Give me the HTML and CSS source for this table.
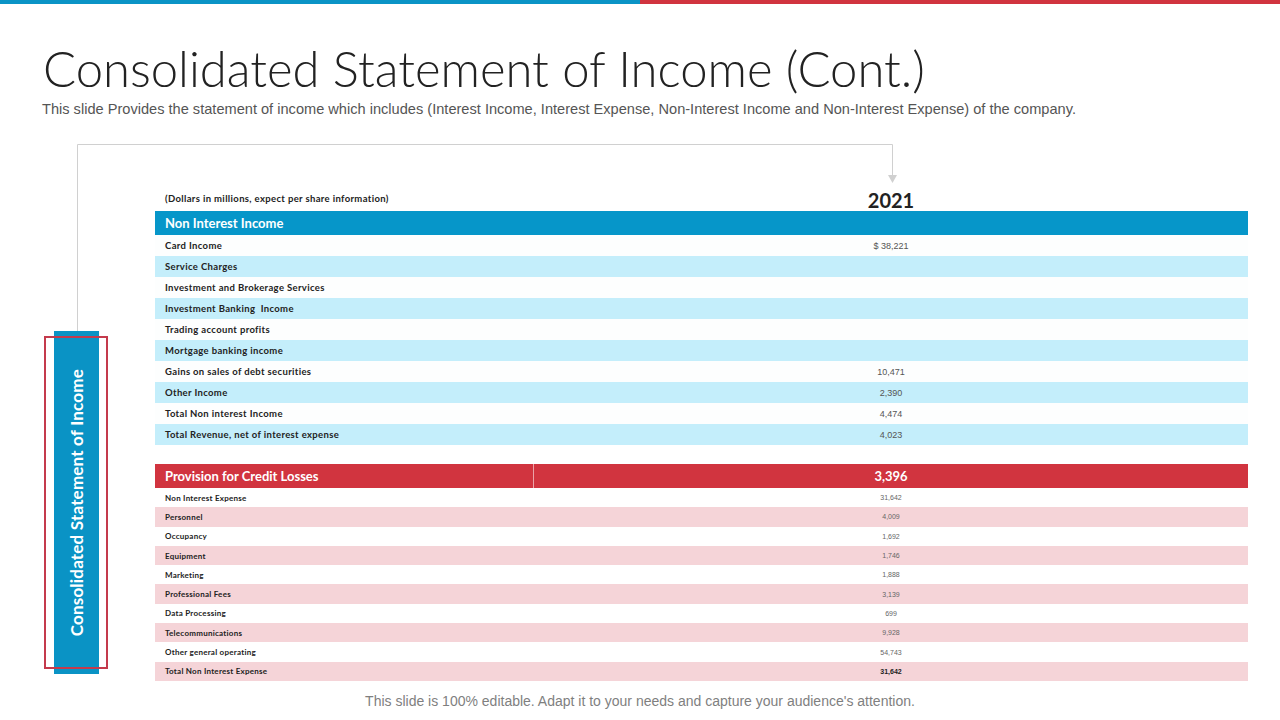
FILE: index.html
```html
<!DOCTYPE html>
<html lang="en">
<head>
<meta charset="utf-8">
<title>Consolidated Statement of Income (Cont.)</title>
<link rel="stylesheet" href="styles.css">
</head>
<body>
<div class="slide">
  <div class="topbar"><div class="tb-blue"></div><div class="tb-red"></div></div>
  <header class="head">
    <h1 class="title">Consolidated Statement of Income (Cont.)</h1>
    <p class="subtitle">This slide Provides the statement of income which includes (Interest Income, Interest Expense, Non-Interest Income and Non-Interest Expense) of the company.</p>
  </header>
  <main class="content">
    <svg class="connector" width="1280" height="200" viewBox="0 0 1280 200">
      <path d="M77.5 188 V0.5 H892.5 V32" fill="none" stroke="#d0d0d0" stroke-width="1"/>
      <path d="M888 31 L897 31 L892.5 39 Z" fill="#d0d0d0"/>
    </svg>
    <aside class="side">
      <div class="sidebar"><span class="side-label">Consolidated Statement of Income</span></div>
      <div class="side-outline"></div>
    </aside>
    <section class="table">
      <div class="cap-row">
        <div class="caption">(Dollars in millions, expect per share information)</div>
        <div class="year">2021</div>
      </div>
      <div class="row head-blue"><div class="lbl">Non Interest Income</div><div class="val"></div></div>
      <div class="row b"><div class="lbl">Card Income</div><div class="val">$ 38,221</div></div>
      <div class="row b alt"><div class="lbl">Service Charges</div><div class="val"></div></div>
      <div class="row b"><div class="lbl">Investment and Brokerage Services</div><div class="val"></div></div>
      <div class="row b alt"><div class="lbl">Investment Banking&nbsp; Income</div><div class="val"></div></div>
      <div class="row b"><div class="lbl">Trading account profits</div><div class="val"></div></div>
      <div class="row b alt"><div class="lbl">Mortgage banking income</div><div class="val"></div></div>
      <div class="row b"><div class="lbl">Gains on sales of debt securities</div><div class="val">10,471</div></div>
      <div class="row b alt"><div class="lbl">Other Income</div><div class="val">2,390</div></div>
      <div class="row b"><div class="lbl">Total Non interest Income</div><div class="val">4,474</div></div>
      <div class="row b alt"><div class="lbl">Total Revenue, net of interest expense</div><div class="val">4,023</div></div>

      <div class="row head-red"><div class="lbl">Provision for Credit Losses</div><div class="val">3,396</div></div>
      <div class="row r"><div class="lbl">Non Interest Expense</div><div class="val">31,642</div></div>
      <div class="row r alt"><div class="lbl">Personnel</div><div class="val">4,009</div></div>
      <div class="row r"><div class="lbl">Occupancy</div><div class="val">1,692</div></div>
      <div class="row r alt"><div class="lbl">Equipment</div><div class="val">1,746</div></div>
      <div class="row r"><div class="lbl">Marketing</div><div class="val">1,888</div></div>
      <div class="row r alt"><div class="lbl">Professional Fees</div><div class="val">3,139</div></div>
      <div class="row r"><div class="lbl">Data Processing</div><div class="val">699</div></div>
      <div class="row r alt"><div class="lbl">Telecommunications</div><div class="val">9,928</div></div>
      <div class="row r"><div class="lbl">Other general operating</div><div class="val">54,743</div></div>
      <div class="row r alt total"><div class="lbl">Total Non Interest Expense</div><div class="val">31,642</div></div>
    </section>
  </main>
  <footer class="foot">This slide is 100% editable. Adapt it to your needs and capture your audience's attention.</footer>
</div>
</body>
</html>
```

FILE: styles.css
```css
* { box-sizing: border-box; }
html, body { margin: 0; padding: 0; background: #fff; }
.slide {
  width: 1280px;
  height: 720px;
  overflow: hidden;
  display: flex;
  flex-direction: column;
  font-family: "Lato", "Open Sans", sans-serif;
}
.topbar { display: flex; height: 4px; }
.tb-blue { flex: 1; background: #0a94c6; }
.tb-red { flex: 1; background: #d1343f; }

.head { padding: 0 0 0 43px; }
.title {
  margin: 36px 0 0 0;
  font-family: "Lato", sans-serif;
  font-weight: 300;
  font-size: 49px;
  line-height: 56px;
  color: #222;
  letter-spacing: 0;
}
.subtitle {
  margin: 4px 0 0 -1px;
  font-family: "Liberation Sans", Arial, sans-serif;
  font-size: 14.6px;
  line-height: 18px;
  color: #555;
}

.content {
  position: relative;
  display: flex;
  margin-top: 26px;
  height: 540px;
}
.connector { position: absolute; left: 0; top: 0; }

.side {
  position: relative;
  width: 155px;
  flex: none;
  padding-left: 54px;
  padding-top: 187px;
}
.sidebar {
  width: 45px;
  height: 343px;
  background: #0a93c5;
  display: flex;
  align-items: center;
  justify-content: center;
}
.side-label {
  writing-mode: vertical-rl;
  transform: rotate(180deg);
  color: #fff;
  font-family: "Lato", sans-serif;
  font-weight: 700;
  font-size: 17px;
  letter-spacing: 0.2px;
  white-space: nowrap;
}
.side-outline {
  position: absolute;
  left: 44px;
  top: 192px;
  width: 64px;
  height: 333px;
  border: 2px solid #c43a4c;
}

.table { width: 1093px; padding-top: 41px; }
.cap-row {
  display: grid;
  grid-template-columns: 379px 1fr;
  height: 26px;
  align-items: end;
}
.caption {
  padding-left: 10px;
  padding-bottom: 7px;
  font-size: 9.5px;
  font-weight: 700;
  letter-spacing: 0.35px;
  color: #222;
}
.year {
  text-align: center;
  font-family: "Lato", sans-serif;
  font-weight: 700;
  font-size: 20px;
  line-height: 22px;
  color: #222;
  padding-bottom: 0;
}
.row {
  display: grid;
  grid-template-columns: 379px 1fr;
  align-items: center;
}
.lbl { padding-left: 10px; white-space: nowrap; }
.val { text-align: center; font-family: "Liberation Sans", Arial, sans-serif; }

.head-blue { height: 24px; background: #0696c9; color: #fff; }
.head-blue .lbl { font-size: 13px; font-weight: 700; letter-spacing: 0; }

.b { height: 21px; background: #fdfefe; }
.b.alt { background: #c4eefb; }
.b .lbl { font-size: 9.5px; font-weight: 700; color: #222; letter-spacing: 0.35px; }
.b .val { font-size: 9px; color: #555; }

.head-red { height: 24px; background: #d1343f; color: #fff; margin-top: 19px; }
.head-red .lbl {
  height: 100%;
  display: flex;
  align-items: center;
  font-size: 13px;
  font-weight: 700;
  border-right: 1px solid rgba(255,255,255,0.55);
}
.head-red .val { font-family: "Lato", sans-serif; font-size: 13px; font-weight: 700; }

.r { height: 19.3px; background: #fff; }
.r.alt { background: #f5d4d8; }
.r .lbl { font-size: 8px; font-weight: 700; color: #222; letter-spacing: 0.25px; }
.r .val { font-size: 7px; color: #666; }
.r.total .val { font-weight: 700; color: #222; }

.foot {
  margin-top: auto;
  height: 28px;
  text-align: center;
  font-family: "Liberation Sans", Arial, sans-serif;
  font-size: 14px;
  line-height: 18px;
  color: #7f7f7f;
}
```
